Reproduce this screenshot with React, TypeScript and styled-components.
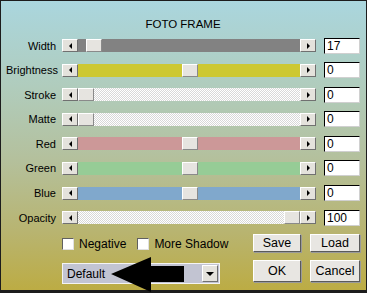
import React from "react"
import styled, {createGlobalStyle} from "styled-components"

const GlobalStyle = createGlobalStyle`
  html, body {
    margin: 0;
    padding: 0;
    background: #b8a848;
  }
`;

const Frame = styled.div`
  position: relative;
  width: 367px;
  height: 293px;
  box-sizing: border-box;
  border: 1px solid #1c1c1c;
  border-bottom-width: 3px;
  background: linear-gradient(180deg, #aad6de 0%, #b0ccbc 30%, #b4c09c 55%, #b8b470 80%, #bcac44 100%);
  font-family: "Liberation Sans", Arial, sans-serif;
  font-size: 11px;
  color: #000;
  padding: 17px 6px 0 5px;
`;

const Title = styled.div`
  text-align: center;
  font-size: 11.5px;
  height: 13px;
  line-height: 13px;
  margin-bottom: 8px;
`;

const Rows = styled.div`
  display: flex;
  flex-direction: column;
  gap: 11.6px;
`;

const Row = styled.div`
  display: flex;
  align-items: center;
  height: 13px;
`;

const Label = styled.div`
  width: 50px;
  text-align: right;
  margin-right: 6px;
  white-space: nowrap;
`;

const Track = styled.div<{ $bg: string }>`
  display: flex;
  width: 254px;
  height: 13px;
  background: ${p => p.$bg};
`;

const Rail = styled.div`
  position: relative;
  flex: 1;
`;

const ArrowButton = styled.div<{ $dir: "left" | "right" }>`
  width: 16px;
  height: 13px;
  box-sizing: border-box;
  background: #e4e2dc;
  border-top: 1px solid #fff;
  border-left: 1px solid #fff;
  border-right: 1px solid #707070;
  border-bottom: 1px solid #707070;
  display: flex;
  align-items: center;
  justify-content: center;
  &::after {
    content: "";
    width: 0;
    height: 0;
    border-top: 3px solid transparent;
    border-bottom: 3px solid transparent;
    ${p => p.$dir === "left" ? "border-right: 3px solid #000;" : "border-left: 3px solid #000;"}
  }
`;

const Thumb = styled.div`
  position: absolute;
  top: 0;
  width: 16px;
  height: 13px;
  box-sizing: border-box;
  background: #e6e4e0;
  border-top: 1px solid #fff;
  border-left: 1px solid #fff;
  border-right: 1px solid #8a8a8a;
  border-bottom: 1px solid #8a8a8a;
`;

const ValueBox = styled.div`
  width: 36px;
  height: 16px;
  margin-left: 8px;
  box-sizing: border-box;
  background: #fff;
  border-top: 1px solid #000;
  border-left: 1px solid #000;
  border-right: 1px solid #d0d0d0;
  border-bottom: 1px solid #d0d0d0;
  padding-left: 2px;
  line-height: 14px;
  font-size: 12px;
`;

const Bottom = styled.div`
  display: flex;
  margin-top: 10px;
  padding-left: 56px;
`;

const LeftCol = styled.div`
  display: flex;
  flex-direction: column;
  width: 192px;
`;

const Checks = styled.div`
  display: flex;
  align-items: center;
  height: 18px;
  gap: 5px;
  padding-top: 1px;
`;

const Box = styled.div`
  width: 12px;
  height: 12px;
  box-sizing: border-box;
  background: #fff;
  border-top: 1px solid #606060;
  border-left: 1px solid #606060;
  border-right: 1px solid #e0e0e0;
  border-bottom: 1px solid #e0e0e0;
`;

const CheckLabel = styled.span<{ $gap?: number }>`
  font-size: 12px;
  margin-right: ${p => p.$gap ?? 0}px;
`;

const Select = styled.div`
  position: relative;
  display: flex;
  align-items: center;
  margin-top: 10px;
  width: 158px;
  height: 21px;
  box-sizing: border-box;
  border: 1px solid #f4f4f4;
  background: #c2c4d2;
  padding: 1px;
`;

const SelectText = styled.div`
  flex: 1;
  padding-left: 3px;
  font-size: 12px;
`;

const SelectButton = styled.div`
  width: 16px;
  height: 17px;
  box-sizing: border-box;
  background: #e4e2dc;
  border-top: 1px solid #fff;
  border-left: 1px solid #fff;
  border-right: 1px solid #707070;
  border-bottom: 1px solid #707070;
  display: flex;
  align-items: center;
  justify-content: center;
  &::after {
    content: "";
    border-left: 4px solid transparent;
    border-right: 4px solid transparent;
    border-top: 4px solid #000;
  }
`;

const Buttons = styled.div`
  display: grid;
  grid-template-columns: 48px 50px;
  grid-template-rows: 18px 22px;
  column-gap: 9px;
  row-gap: 8px;
  margin-left: 2px;
  margin-top: 0;
`;

const Btn = styled.div`
  box-sizing: border-box;
  background: #e8e6e2;
  border-top: 1px solid #fff;
  border-left: 1px solid #fff;
  border-right: 1px solid #5a5a5a;
  border-bottom: 1px solid #5a5a5a;
  box-shadow: 1px 1px 0 #9a9a9a;
  display: flex;
  align-items: center;
  justify-content: center;
  font-size: 12.5px;
`;

const BigArrow = styled.svg`
  position: absolute;
  left: 110px;
  top: 256px;
`;

const dither = "repeating-conic-gradient(#d8d8d8 0% 25%, #ffffff 0% 50%) 0 0 / 2px 2px";

type Slider = { label: string; bg: string; pos: number; value: string };

const sliders: Slider[] = [
    {label: "Width", bg: "#828282", pos: 8, value: "17"},
    {label: "Brightness", bg: "#cdc832", pos: 104, value: "0"},
    {label: "Stroke", bg: dither, pos: 0, value: "0"},
    {label: "Matte", bg: dither, pos: 0, value: "0"},
    {label: "Red", bg: "#cc9898", pos: 104, value: "0"},
    {label: "Green", bg: "#96cc96", pos: 104, value: "0"},
    {label: "Blue", bg: "#80a8cc", pos: 104, value: "0"},
    {label: "Opacity", bg: dither, pos: 206, value: "100"},
];

export default function App() {
    return (
        <>
            <GlobalStyle/>
            <Frame>
                <Title>FOTO FRAME</Title>
                <Rows>
                    {sliders.map(s => (
                        <Row key={s.label}>
                            <Label>{s.label}</Label>
                            <Track $bg={s.bg}>
                                <ArrowButton $dir="left"/>
                                <Rail>
                                    <Thumb style={{left: s.pos}}/>
                                </Rail>
                                <ArrowButton $dir="right"/>
                            </Track>
                            <ValueBox>{s.value}</ValueBox>
                        </Row>
                    ))}
                </Rows>
                <Bottom>
                    <LeftCol>
                        <Checks>
                            <Box/>
                            <CheckLabel $gap={6}>Negative</CheckLabel>
                            <Box/>
                            <CheckLabel>More Shadow</CheckLabel>
                        </Checks>
                        <Select>
                            <SelectText>Default</SelectText>
                            <SelectButton/>
                        </Select>
                    </LeftCol>
                    <Buttons>
                        <Btn>Save</Btn>
                        <Btn>Load</Btn>
                        <Btn>OK</Btn>
                        <Btn>Cancel</Btn>
                    </Buttons>
                </Bottom>
                <BigArrow width="74" height="36" viewBox="0 0 74 36">
                    <polygon points="0,17 40,0 40,9 73,9 73,25 40,25 40,35" fill="#000"/>
                </BigArrow>
            </Frame>
        </>
    )
}
